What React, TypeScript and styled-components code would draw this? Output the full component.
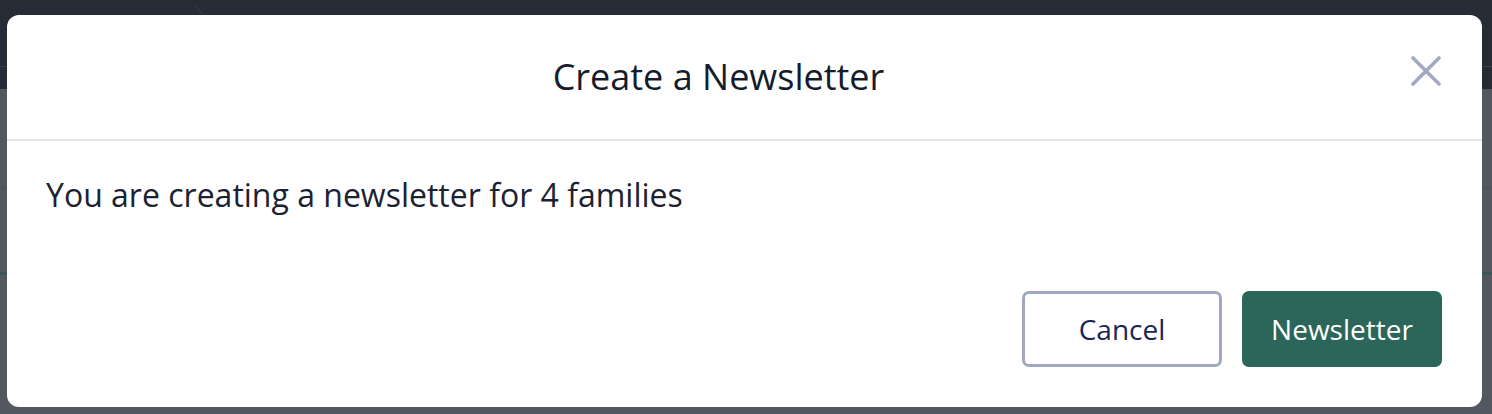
import React from "react";
import styled, { createGlobalStyle } from "styled-components";

const GlobalStyle = createGlobalStyle`
  html, body {
    margin: 0;
    padding: 0;
  }
  body {
    font-family: "Open Sans", "Noto Sans", sans-serif;
    background: #53575f;
  }
`;

const Page = styled.div`
  position: relative;
  width: 1492px;
  height: 414px;
  overflow: hidden;
  background: #53575f;
`;

const NavBar = styled.div`
  position: relative;
  height: 89px;
  background: #262b36;
  overflow: hidden;
`;

const NavRule = styled.div`
  margin-top: 66px;
  height: 1px;
  background: #3a3f4a;
`;

/* faint edge of a round avatar peeking out above the dialog */
const NavRing = styled.div`
  position: absolute;
  left: 63px;
  top: -17px;
  width: 154px;
  height: 154px;
  border-radius: 50%;
  border: 1px solid transparent;
  border-right-color: rgba(255, 255, 255, 0.08);
`;

const PageRule = styled.div<{ $top: number; $color: string }>`
  margin-top: ${({ $top }) => $top}px;
  height: 3px;
  background: ${({ $color }) => $color};
`;

const Dialog = styled.div`
  position: absolute;
  left: 7px;
  top: 15px;
  width: 1475px;
  height: 392px;
  box-sizing: border-box;
  background: #ffffff;
  border-radius: 12px;
  display: flex;
  flex-direction: column;
`;

const Header = styled.div`
  height: 124px;
  display: flex;
  align-items: center;
  padding: 0 40px;
  border-bottom: 2px solid #e2e6e4;
`;

const Title = styled.h2`
  flex: 1;
  margin: 0;
  text-align: center;
  font-size: 36px;
  font-weight: 400;
  color: #151c2c;
  line-height: 1.3;
`;

const CloseButton = styled.button`
  width: 32px;
  height: 32px;
  margin-left: 20px;
  margin-top: -12px;
  padding: 0;
  border: none;
  background: transparent;
  display: flex;
  align-items: center;
  justify-content: center;
  cursor: pointer;
`;

const Body = styled.p`
  margin: 0;
  padding: 30px 40px 0 39px;
  font-size: 32px;
  line-height: 48px;
  color: #1b2232;
`;

const Footer = styled.div`
  margin-top: auto;
  display: flex;
  justify-content: flex-end;
  gap: 20px;
  padding: 0 40px 40px;
`;

const Button = styled.button<{ $primary?: boolean }>`
  width: 200px;
  height: 76px;
  box-sizing: border-box;
  border-radius: 7px;
  font-family: "Open Sans", "Noto Sans", sans-serif;
  font-size: 28px;
  cursor: pointer;
  border: 3px solid ${({ $primary }) => ($primary ? "#2c665a" : "#a1a8c2")};
  background: ${({ $primary }) => ($primary ? "#2c665a" : "#ffffff")};
  color: ${({ $primary }) => ($primary ? "#ffffff" : "#1c2455")};
`;

const CloseIcon = () => (
  <svg width="30" height="30" viewBox="0 0 30 30" fill="none">
    <path
      d="M2 2 L28 28 M28 2 L2 28"
      stroke="#a3a9c3"
      strokeWidth="3.6"
      strokeLinecap="round"
    />
  </svg>
);

export default function App() {
  return (
    <>
      <GlobalStyle />
      <Page>
        <NavBar>
          <NavRing />
          <NavRule />
        </NavBar>
        <PageRule $top={97} $color="#50545c" />
        <PageRule $top={83} $color="#3b5658" />
        <Dialog role="dialog" aria-labelledby="newsletter-title">
          <Header>
            <Title id="newsletter-title">Create a Newsletter</Title>
            <CloseButton aria-label="Close">
              <CloseIcon />
            </CloseButton>
          </Header>
          <Body>You are creating a newsletter for 4 families</Body>
          <Footer>
            <Button>Cancel</Button>
            <Button $primary>Newsletter</Button>
          </Footer>
        </Dialog>
      </Page>
    </>
  );
}
